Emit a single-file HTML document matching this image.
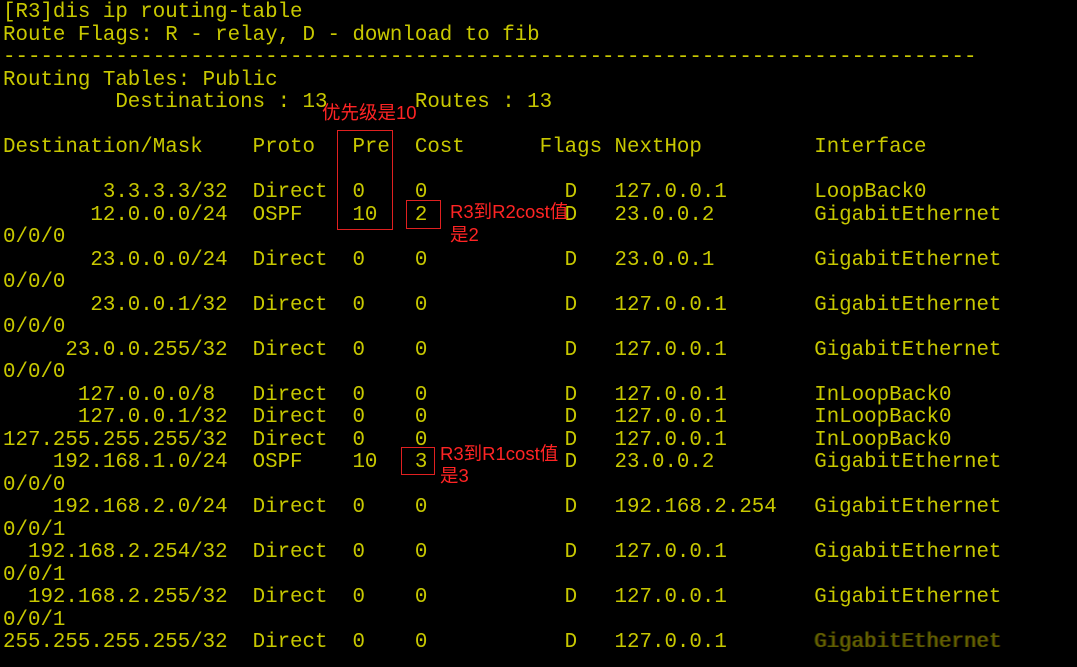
<!DOCTYPE html>
<html><head><meta charset="utf-8"><style>
html,body{margin:0;padding:0;background:#000;width:1077px;height:667px;overflow:hidden}
pre{position:absolute;left:3px;top:2px;margin:0;font-family:"Liberation Mono",monospace;font-size:20.8px;line-height:22.5px;color:#c8c800;}
.b{position:absolute;border:1px solid #e02020}
.t{position:absolute;color:#ff2424;font-family:"Liberation Sans","Noto Sans CJK SC",sans-serif;font-size:18.5px;line-height:22px;white-space:nowrap}
.f{opacity:.55;color:#b0b000;text-shadow:1px 0 #804000,-1px 0 #406000}
</style></head><body>
<pre>[R3]dis ip routing-table
Route Flags: R - relay, D - download to fib
------------------------------------------------------------------------------
Routing Tables: Public
         Destinations : 13       Routes : 13

Destination/Mask    Proto   Pre  Cost      Flags NextHop         Interface

        3.3.3.3/32  Direct  0    0           D   127.0.0.1       LoopBack0
       12.0.0.0/24  OSPF    10   2           D   23.0.0.2        GigabitEthernet
0/0/0
       23.0.0.0/24  Direct  0    0           D   23.0.0.1        GigabitEthernet
0/0/0
       23.0.0.1/32  Direct  0    0           D   127.0.0.1       GigabitEthernet
0/0/0
     23.0.0.255/32  Direct  0    0           D   127.0.0.1       GigabitEthernet
0/0/0
      127.0.0.0/8   Direct  0    0           D   127.0.0.1       InLoopBack0
      127.0.0.1/32  Direct  0    0           D   127.0.0.1       InLoopBack0
127.255.255.255/32  Direct  0    0           D   127.0.0.1       InLoopBack0
    192.168.1.0/24  OSPF    10   3           D   23.0.0.2        GigabitEthernet
0/0/0
    192.168.2.0/24  Direct  0    0           D   192.168.2.254   GigabitEthernet
0/0/1
  192.168.2.254/32  Direct  0    0           D   127.0.0.1       GigabitEthernet
0/0/1
  192.168.2.255/32  Direct  0    0           D   127.0.0.1       GigabitEthernet
0/0/1
255.255.255.255/32  Direct  0    0           D   127.0.0.1       <span class="f">GigabitEthernet</span></pre>
<div class="b" style="left:337px;top:130px;width:54px;height:98px"></div>
<div class="t" style="left:322px;top:102px">优先级是10</div>
<div class="b" style="left:406px;top:200px;width:33px;height:27px"></div>
<div class="t" style="left:450px;top:201px">R3到R2cost值</div>
<div class="t" style="left:450px;top:224px">是2</div>
<div class="b" style="left:401px;top:447px;width:32px;height:26px"></div>
<div class="t" style="left:440px;top:443px">R3到R1cost值</div>
<div class="t" style="left:440px;top:465px">是3</div>
</body></html>
